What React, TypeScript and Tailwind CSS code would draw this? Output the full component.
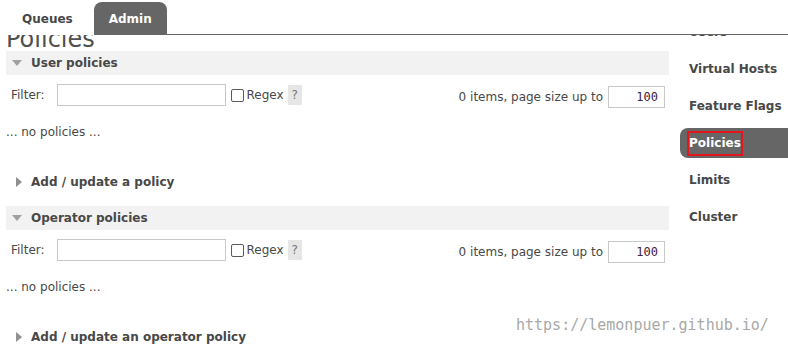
import type { ReactNode } from "react";

const sideItems = ["Users", "Virtual Hosts", "Feature Flags", "Policies", "Limits", "Cluster"];

function DownArrow() {
  return (
    <svg width="10" height="6" viewBox="0 0 10 6" className="shrink-0">
      <path d="M0 0 H10 L5 6 Z" fill="#a0a0a0" />
    </svg>
  );
}

function RightArrow() {
  return (
    <svg width="6" height="10" viewBox="0 0 6 10" className="shrink-0">
      <path d="M0 0 L6 5 L0 10 Z" fill="#909090" />
    </svg>
  );
}

function SectionHeader({ children }: { children: ReactNode }) {
  return (
    <div className="flex h-[24px] items-center gap-[9px] bg-[#f2f2f2] pl-[6px] font-bold">
      <DownArrow />
      {children}
    </div>
  );
}

function FilterRow() {
  return (
    <div className="mt-[9px] flex h-[22px] items-center pl-[5px] pr-[4px]">
      <span>Filter:</span>
      <input
        type="text"
        className="ml-[12px] h-[22px] w-[169px] border border-[#c8c8c8] bg-white outline-none"
      />
      <span className="ml-[5px] h-[13px] w-[13px] rounded-[2px] border border-[#5a5a5a] bg-white" />
      <span className="ml-[3px]">Regex</span>
      <span className="ml-[4px] flex h-[20px] w-[14px] items-center justify-center bg-[#e6e6e6] text-[#777]">
        ?
      </span>
      <span className="ml-auto mt-[3px]">0 items, page size up to</span>
      <input
        type="text"
        defaultValue="100"
        className="ml-[5px] mt-[3px] h-[22px] w-[57px] border border-[#c8c8c8] bg-white pr-[6px] text-right font-['DejaVu_Sans_Mono',monospace] text-[12px] text-[#402040] outline-none"
      />
    </div>
  );
}

function PolicySection({ title, addLabel }: { title: string; addLabel: string }) {
  return (
    <section>
      <SectionHeader>{title}</SectionHeader>
      <FilterRow />
      <p className="mt-[19px] leading-[15px]">... no policies ...</p>
      <div className="mt-[34px] flex h-[15px] items-center gap-[9px] pl-[10px] font-bold">
        <RightArrow />
        {addLabel}
      </div>
    </section>
  );
}

export default function App() {
  return (
    <div className="relative h-[354px] w-[788px] overflow-hidden bg-white font-['DejaVu_Sans',Verdana,sans-serif] text-[12px] text-[#484848]">
      <header className="flex h-[35px] items-end">
        <div className="ml-[6px] flex h-[33px] items-center px-[16px] font-bold">Queues</div>
        <div className="ml-[5px] flex h-[33px] items-center rounded-t-[8px] bg-[#666] px-[15px] font-bold text-white">
          Admin
        </div>
        <div className="h-px flex-1 bg-[#666]" />
      </header>

      <div className="flex h-[319px] overflow-hidden">
        <main className="ml-[6px] -mt-[8px] w-[663px] shrink-0">
          <h1 className="text-[24px] leading-[24px] text-[#505050]">Policies</h1>
          <PolicySection title="User policies" addLabel="Add / update a policy" />
          <div className="mt-[17px]">
            <PolicySection title="Operator policies" addLabel="Add / update an operator policy" />
          </div>
        </main>

        <nav className="-mt-[18px] ml-[11px] flex flex-1 flex-col gap-[7px] font-bold">
          {sideItems.map((item) =>
            item === "Policies" ? (
              <div
                key={item}
                className="flex h-[30px] items-center rounded-l-[8px] bg-[#666] pl-[9px] text-white"
              >
                <span className="inline-block h-[21px] leading-[21px] outline-2 outline-[#e3161c]">
                  {item}
                </span>
              </div>
            ) : (
              <div key={item} className="flex h-[30px] items-center pl-[9px]">
                {item}
              </div>
            ),
          )}
        </nav>
      </div>

      <div className="absolute left-[516px] top-[315px] font-['DejaVu_Sans_Mono',monospace] text-[15px] leading-[20px] text-[#a8a8a8]">
        https://lemonpuer.github.io/
      </div>
    </div>
  );
}
